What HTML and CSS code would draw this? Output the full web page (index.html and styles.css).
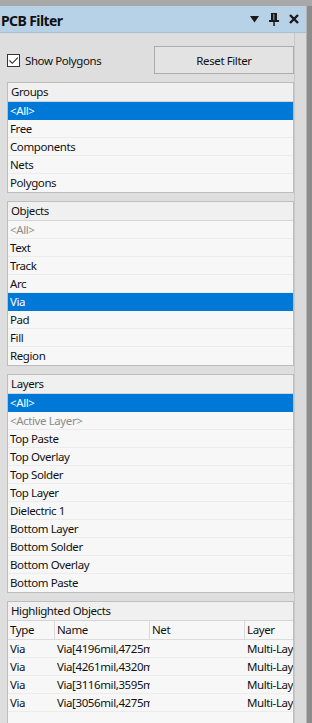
FILE: index.html
```html
<!DOCTYPE html>
<html>
<head>
<meta charset="utf-8">
<link rel="stylesheet" href="styles.css">
</head>
<body>
<div class="topstrip"></div>
<div class="main">
  <div class="panel">
    <div class="titlebar">
      <span class="title">PCB Filter</span>
      <div class="tools">
        <svg class="ico" width="9" height="7" viewBox="0 0 9 7"><path d="M0 0H9L4.5 6.5Z" fill="#1a1a1a"/></svg>
        <svg class="ico" width="10" height="13" viewBox="0 0 10 13"><rect x="2" y="0" width="6" height="7" fill="#1a1a1a"/><rect x="4" y="1" width="1.5" height="6" fill="#6d7c88"/><rect x="0" y="7" width="10" height="2" fill="#1a1a1a"/><rect x="4.3" y="9" width="1.5" height="4" fill="#1a1a1a"/></svg>
        <svg class="ico" width="10" height="10" viewBox="0 0 10 10"><path d="M1 1L9 9M9 1L1 9" stroke="#1a1a1a" stroke-width="2.4"/></svg>
      </div>
    </div>
    <div class="content">
      <div class="body">
        <div class="controls">
          <label class="check"><span class="box"><svg width="11" height="11" viewBox="0 0 11 11"><path d="M1.5 5.5L4.3 8.3L9.8 2.6" fill="none" stroke="#2b2b2b" stroke-width="1.1"/></svg></span>Show Polygons</label>
          <button class="btn">Reset Filter</button>
        </div>

        <div class="list">
          <div class="lhead">Groups</div>
          <div class="row sel">&lt;All&gt;</div>
          <div class="row">Free</div>
          <div class="row">Components</div>
          <div class="row">Nets</div>
          <div class="row">Polygons</div>
        </div>

        <div class="list">
          <div class="lhead">Objects</div>
          <div class="row dim">&lt;All&gt;</div>
          <div class="row">Text</div>
          <div class="row">Track</div>
          <div class="row">Arc</div>
          <div class="row sel">Via</div>
          <div class="row">Pad</div>
          <div class="row">Fill</div>
          <div class="row">Region</div>
        </div>

        <div class="list">
          <div class="lhead">Layers</div>
          <div class="row sel">&lt;All&gt;</div>
          <div class="row dim">&lt;Active Layer&gt;</div>
          <div class="row">Top Paste</div>
          <div class="row">Top Overlay</div>
          <div class="row">Top Solder</div>
          <div class="row">Top Layer</div>
          <div class="row">Dielectric 1</div>
          <div class="row">Bottom Layer</div>
          <div class="row">Bottom Solder</div>
          <div class="row">Bottom Overlay</div>
          <div class="row">Bottom Paste</div>
        </div>

        <div class="list table">
          <div class="lhead">Highlighted Objects</div>
          <div class="trow thead">
            <div class="c c1">Type</div><div class="c c2">Name</div><div class="c c3">Net</div><div class="c c4">Layer</div>
          </div>
          <div class="trow">
            <div class="c c1">Via</div><div class="c c2">Via[4196mil,4725mil]</div><div class="c c3"></div><div class="c c4">Multi-Layer</div>
          </div>
          <div class="trow">
            <div class="c c1">Via</div><div class="c c2">Via[4261mil,4320mil]</div><div class="c c3"></div><div class="c c4">Multi-Layer</div>
          </div>
          <div class="trow">
            <div class="c c1">Via</div><div class="c c2">Via[3116mil,3595mil]</div><div class="c c3"></div><div class="c c4">Multi-Layer</div>
          </div>
          <div class="trow">
            <div class="c c1">Via</div><div class="c c2">Via[3056mil,4275mil]</div><div class="c c3"></div><div class="c c4">Multi-Layer</div>
          </div>
          <div class="tfill"></div>
        </div>
      </div>
      <div class="side"></div>
    </div>
  </div>
  <div class="edge"></div>
</div>
</body>
</html>
```

FILE: styles.css
```css
html, body {
  margin: 0;
  padding: 0;
  height: 723px;
  overflow: hidden;
  background: #dcdcdc;
  font-family: "Noto Sans", "Open Sans", sans-serif;
  font-size: 11.5px;
  color: #111;
}
.topstrip {
  height: 6px;
  background: #a8a8a8;
}
.main {
  display: flex;
  height: 717px;
}
.panel {
  width: 306px;
  display: flex;
  flex-direction: column;
  background: #dedede;
}
.edge {
  flex: 1;
  background: #8c8c8c;
  border-left: 1px solid #b4b4b4;
}
.titlebar {
  height: 27px;
  background: #b7d1e6;
  border-bottom: 1px solid #a9c0d2;
  box-sizing: border-box;
  display: flex;
  align-items: center;
  justify-content: space-between;
  padding: 0 7px 0 1px;
}
.title {
  font-weight: 700;
  font-size: 14px;
  letter-spacing: -0.6px;
  color: #111;
  padding-top: 2px;
}
.tools {
  display: flex;
  align-items: center;
  gap: 10px;
}
.ico { display: block; }
.content {
  flex: 1;
  display: flex;
  min-height: 0;
}
.body {
  width: 294px;
  padding-left: 7px;
  box-sizing: border-box;
  display: flex;
  flex-direction: column;
  gap: 8px;
}
.side {
  flex: 1;
  border-left: 1px solid #c8c8c8;
  background: #dbdbdb;
}
.controls {
  display: flex;
  align-items: center;
  justify-content: space-between;
  padding-top: 13px;
  height: 28px;
}
.check {
  display: flex;
  align-items: center;
  gap: 5px;
  letter-spacing: -0.4px;
  margin-top: 1px;
}
.check .box {
  width: 13px;
  height: 13px;
  box-sizing: border-box;
  border: 1px solid #333;
  background: #fff;
  display: flex;
  align-items: center;
  justify-content: center;
}
.btn {
  width: 140px;
  height: 28px;
  box-sizing: border-box;
  border: 1px solid #adadad;
  background: #e3e3e3;
  font-family: inherit;
  font-size: 11.5px;
  letter-spacing: -0.4px;
  color: #111;
  padding: 0;
}
.list {
  width: 287px;
  box-sizing: border-box;
  border: 1px solid #bdbdbd;
  background: #f7f7f7;
  flex-shrink: 0;
}
.lhead {
  height: 19px;
  box-sizing: border-box;
  line-height: 18px;
  padding-left: 3px;
  background: #f0f0f0;
  border-bottom: 1px solid #d4d4d4;
  letter-spacing: -0.4px;
}
.row {
  height: 18px;
  box-sizing: border-box;
  line-height: 17px;
  padding-left: 2px;
  border-bottom: 1px solid #ececec;
  letter-spacing: -0.4px;
}
.row:last-child { border-bottom: none; }
.row.sel {
  background: #0078d7;
  color: #fff;
  border-bottom-color: #0078d7;
}
.row.dim { color: #8c8c8c; }
.table {
  flex: 1;
  display: flex;
  flex-direction: column;
  border-bottom: none;
}
.trow {
  display: flex;
  height: 18px;
  box-sizing: border-box;
  border-bottom: 1px solid #ececec;
  line-height: 17px;
  letter-spacing: -0.4px;
}
.trow.thead {
  height: 19px;
  line-height: 18px;
  border-bottom: 1px solid #dcdcdc;
}
.c {
  overflow: hidden;
  white-space: nowrap;
  padding-left: 2px;
  box-sizing: border-box;
}
.thead .c { border-right: 1px solid #dadada; }
.thead .c4 { border-right: none; }
.c1 { width: 47px; }
.c2 { width: 95px; }
.c3 { width: 95px; }
.c4 { flex: 1; }
.tfill { flex: 1; }
```
